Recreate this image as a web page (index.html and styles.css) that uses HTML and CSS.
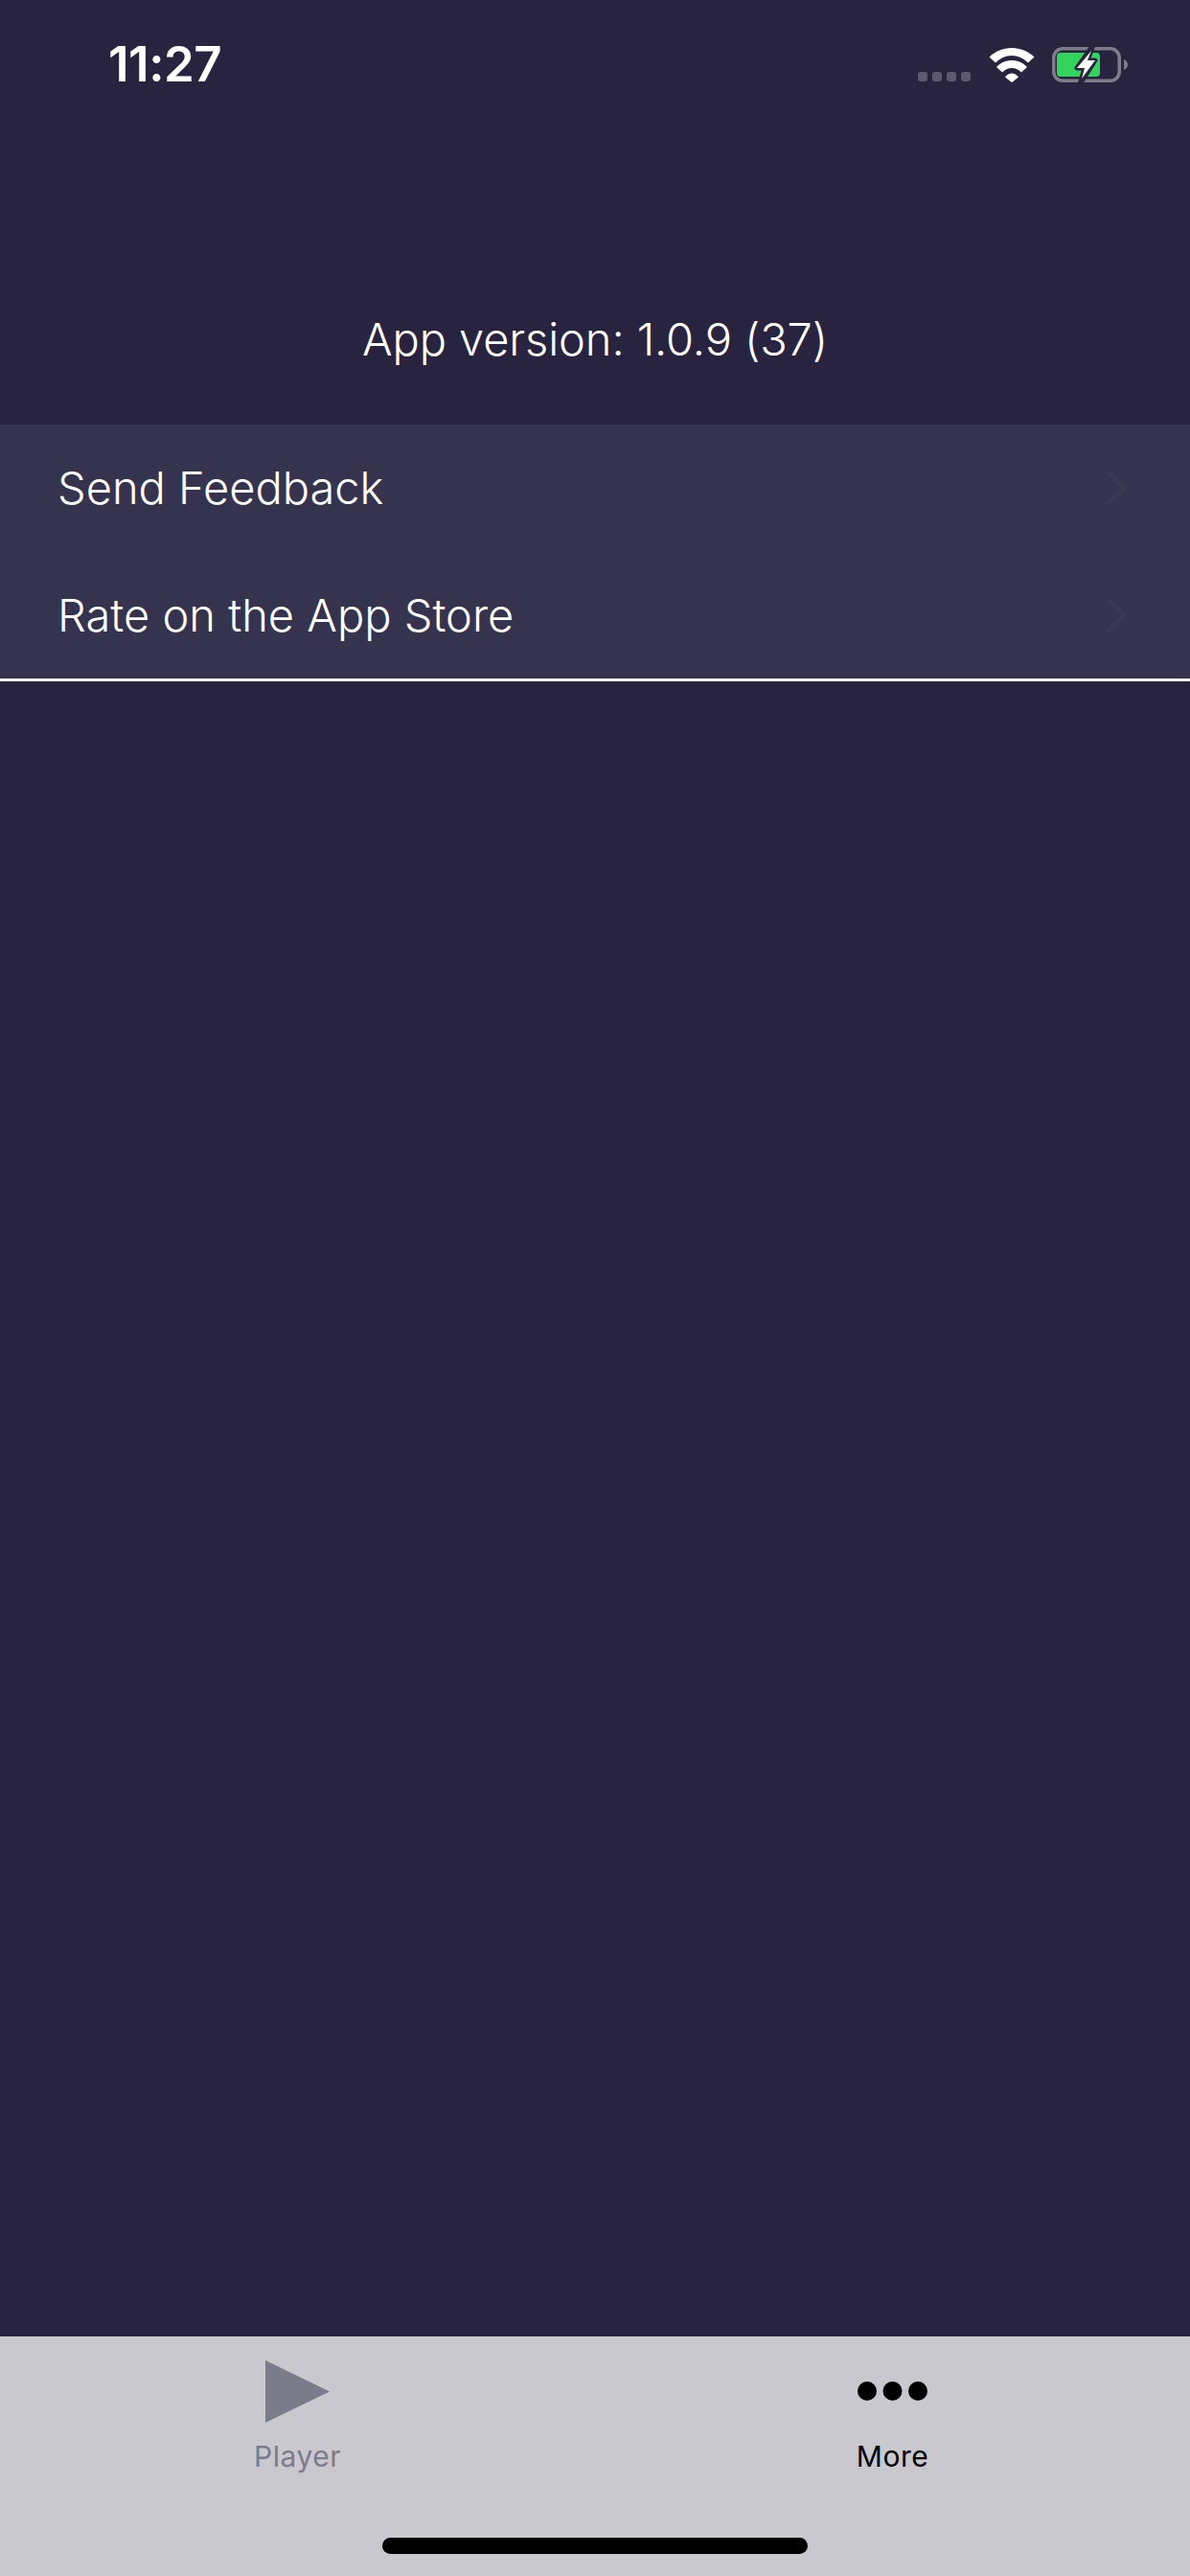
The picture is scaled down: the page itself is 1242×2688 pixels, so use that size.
FILE: index.html
```html
<!DOCTYPE html>
<html lang="en">
<head>
<meta charset="utf-8">
<title>More</title>
<link rel="stylesheet" href="styles.css">
</head>
<body>
<div class="app">
  <header class="status">
    <span class="time">11:27</span>
    <div class="status-icons">
      <svg class="signal" viewBox="0 0 55 10"><rect x="0" y="0" width="10" height="10" rx="3"/><rect x="15" y="0" width="10" height="10" rx="3"/><rect x="30" y="0" width="10" height="10" rx="3"/><rect x="45" y="0" width="10" height="10" rx="3"/></svg>
      <svg class="wifi" viewBox="0 0 48 36"><path d="M.5 9.500C7 3.500 15 0 24 0S41 3.500 47.500 9.500L41 15.500C36.500 11 30.500 8 24 8S11.500 11 7 15.500Z"/><path d="M8 20C12 15.500 18 13 24 13S36 15.500 40 20L34 25.500C31.500 23 28 21 24 21S16.500 23 14 25.500Z"/><path d="M17 30.500C19 28 21.500 26.500 24 26.500S29 28 31 30.500L24 36Z"/></svg>
      <svg class="battery" viewBox="0 0 79 37"><rect x="1.750" y="1.750" width="68.500" height="33.500" rx="9.500" fill="none" stroke="#7e7c8b" stroke-width="3.500"/><path d="M75 13C77.500 14 79 16 79 18.500S77.500 23 75 24Z" fill="#7e7c8b"/><rect x="5" y="6" width="45" height="25" rx="4" fill="#32d45e"/><path d="M43 -2L26 22H34L29 39L45 14H37Z" fill="#282440" stroke="#282440" stroke-width="5" stroke-linejoin="round"/><path d="M41 4L26 22H34L31 33L45 14H37Z" fill="#fff"/></svg>
    </div>
  </header>

  <main class="content">
    <p class="version">App version: 1.0.9 (37)</p>
    <ul class="menu">
      <li class="menu-row">
        <span class="menu-label">Send Feedback</span>
        <svg class="chevron" viewBox="0 0 20 36"><path d="M2 2L18 18L2 34"/></svg>
      </li>
      <li class="menu-row">
        <span class="menu-label">Rate on the App Store</span>
        <svg class="chevron" viewBox="0 0 20 36"><path d="M2 2L18 18L2 34"/></svg>
      </li>
    </ul>
  </main>

  <nav class="tabbar">
    <div class="tabs">
      <div class="tab tab-muted">
        <div class="tab-icon">
          <svg class="play" viewBox="0 0 67 65"><path d="M0 0L67 32.500L0 65Z"/></svg>
        </div>
        <span class="tab-label">Player</span>
      </div>
      <div class="tab">
        <div class="tab-icon">
          <svg class="dots" viewBox="0 0 73 20"><circle cx="10" cy="10" r="10"/><circle cx="36.500" cy="10" r="10"/><circle cx="63" cy="10" r="10"/></svg>
        </div>
        <span class="tab-label">More</span>
      </div>
    </div>
    <div class="home-indicator"></div>
  </nav>
</div>
</body>
</html>
```

FILE: styles.css
```css
* { box-sizing: border-box; }

html, body {
  margin: 0;
  padding: 0;
  background: #282440;
}

.app {
  width: 1242px;
  height: 2688px;
  display: flex;
  flex-direction: column;
  font-family: Inter, "Liberation Sans", sans-serif;
  color: #fff;
  overflow: hidden;
}

.status {
  height: 134px;
  padding: 36px 65px 0 113px;
  display: flex;
  justify-content: space-between;
  align-items: flex-start;
}

.time {
  font-size: 51px;
  font-weight: 600;
  line-height: 62px;
  letter-spacing: -0.5px;
}

.status-icons {
  display: flex;
  align-items: flex-start;
  padding-top: 13px;
}

.signal {
  width: 55px;
  height: 10px;
  margin: 26px 19px 0 0;
  fill: #5c5970;
}

.wifi {
  width: 48px;
  height: 36px;
  margin: 1px 18px 0 0;
  fill: #fff;
}

.battery {
  width: 79px;
  height: 37px;
  overflow: hidden;
}

.content {
  flex: 1;
}

.version {
  margin: 0;
  height: 309px;
  padding-top: 190px;
  text-align: center;
  font-size: 47px;
  font-weight: 350;
  line-height: 60px;
  letter-spacing: -0.1px;
}

.menu {
  margin: 0;
  padding: 0;
  list-style: none;
  background: #36334f;
  border-bottom: 3px solid #fff;
}

.menu-row {
  height: 132px;
  padding: 0 67px 0 60px;
  display: flex;
  align-items: center;
  justify-content: space-between;
}

.menu-row + .menu-row {
  height: 133px;
  border-top: 1px solid #393651;
}

.menu-label {
  font-size: 47px;
  font-weight: 350;
  line-height: 60px;
  letter-spacing: 0;
}

.chevron {
  width: 20px;
  height: 36px;
  fill: none;
  stroke: #3b3852;
  stroke-width: 5;
  stroke-linecap: round;
  stroke-linejoin: round;
}

.tabbar {
  height: 250px;
  background: #c9c8cf;
  color: #000;
  display: flex;
  flex-direction: column;
  align-items: center;
}

.tabs {
  width: 100%;
  display: flex;
}

.tab {
  flex: 1;
  display: flex;
  flex-direction: column;
  align-items: center;
}

.tab-muted {
  color: #7c7b8a;
}

.tab-icon {
  height: 107px;
  padding-top: 7px;
  display: flex;
  align-items: center;
  justify-content: center;
}

.play {
  width: 67px;
  height: 65px;
  fill: currentColor;
}

.dots {
  width: 73px;
  height: 20px;
  fill: currentColor;
}

.tab-label {
  font-size: 30px;
  line-height: 36px;
  letter-spacing: 0.5px;
}

.home-indicator {
  width: 444px;
  height: 17px;
  margin-top: 67px;
  border-radius: 9px;
  background: #000;
}
```
